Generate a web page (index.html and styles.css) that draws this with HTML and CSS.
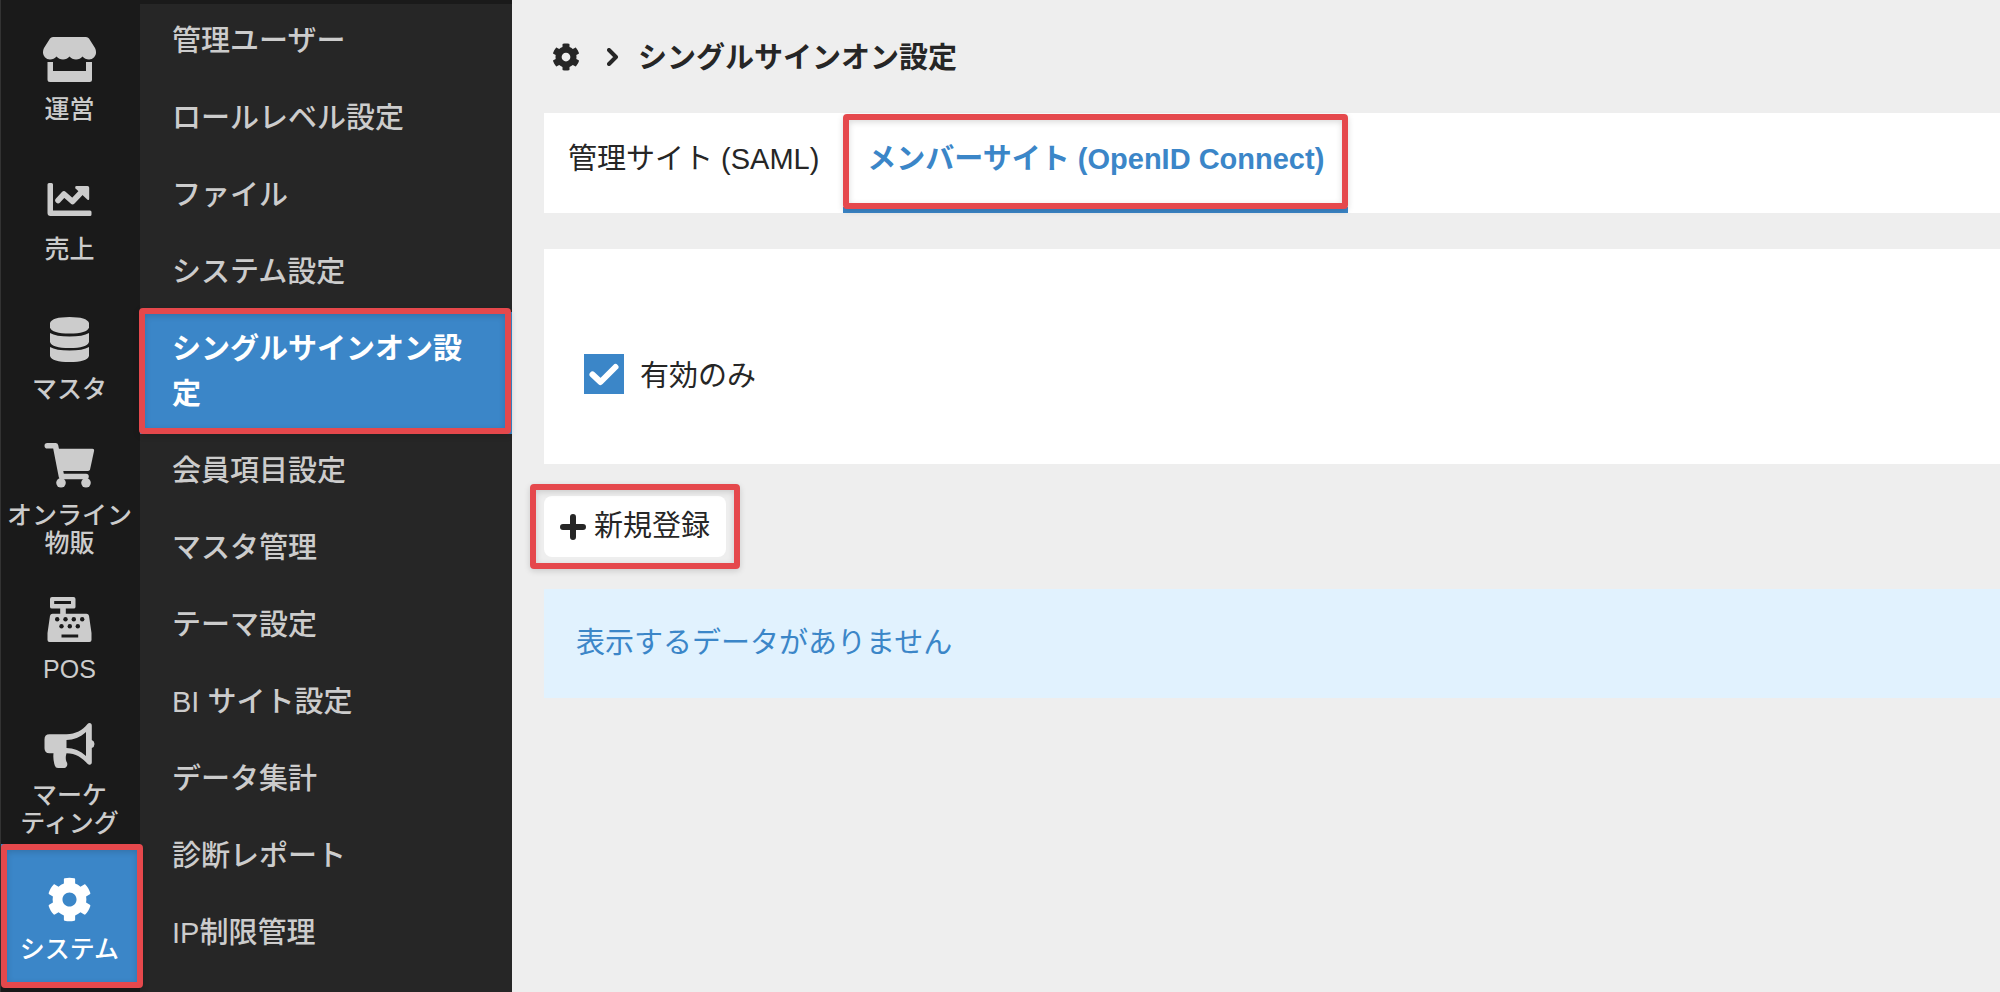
FILE: index.html
```html
<!DOCTYPE html>
<html lang="ja">
<head>
    <meta charset="UTF-8">
    <meta name="viewport" content="width=device-width, initial-scale=1.0">
    <title>シングルサインオン設定</title>
    <link rel="stylesheet" href="styles.css">
</head>
<body>
    <!-- Shared gear icon -->
    <svg class="sprite" aria-hidden="true">
        <symbol id="gear" viewBox="0 0 512 512">
            <path d="M487.4 315.7l-42.6-24.6c4.3-23.2 4.3-47 0-70.2l42.6-24.6c4.9-2.8 7.1-8.6 5.5-14-11.1-35.6-30-67.8-54.7-94.6-3.8-4.1-10-5.1-14.8-2.3L380.8 110c-17.9-15.4-38.5-27.3-60.8-35.1V25.8c0-5.6-3.9-10.5-9.4-11.7-36.7-8.2-74.3-7.8-109.2 0-5.5 1.2-9.4 6.1-9.4 11.7V75c-22.2 7.9-42.8 19.8-60.8 35.1L88.7 85.5c-4.9-2.8-11-1.9-14.8 2.3-24.7 26.7-43.6 58.9-54.7 94.6-1.7 5.4.6 11.2 5.5 14L67.3 221c-4.3 23.2-4.3 47 0 70.2l-42.6 24.6c-4.9 2.8-7.1 8.6-5.5 14 11.1 35.6 30 67.8 54.7 94.6 3.8 4.1 10 5.1 14.8 2.3l42.6-24.6c17.9 15.4 38.5 27.3 60.8 35.1v49.2c0 5.6 3.9 10.5 9.4 11.7 36.7 8.2 74.3 7.8 109.2 0 5.5-1.2 9.4-6.1 9.4-11.7v-49.2c22.2-7.9 42.8-19.8 60.8-35.1l42.6 24.6c4.9 2.8 11 1.9 14.8-2.3 24.7-26.7 43.6-58.9 54.7-94.6 1.5-5.5-.7-11.3-5.6-14.1zM256 336c-44.1 0-80-35.9-80-80s35.9-80 80-80 80 35.9 80 80-35.9 80-80 80z"/>
        </symbol>
    </svg>

    <div class="app">
        <!-- Main menu -->
        <nav class="rail" aria-label="メインメニュー">
            <a href="#" class="rail-item">
                <svg class="rail-icon" viewBox="0 0 53 45">
                    <path d="M10 0h33q2 0 3 1.500L52 11q1 2 1 4a7 7 0 0 1-7 7.500q-4 0-6.500-3q-2.500 3-6.500 3t-6.500-3q-2.500 3-6.500 3t-6.500-3q-2.500 3-6.500 3a7 7 0 0 1-7-7.500q0-2 1-4L7 1.500Q8 0 10 0z"/>
                    <path d="M4.500 25H10v9h33v-9h6v17.500q0 2.500-2.500 2.500H7q-2.500 0-2.500-2.500z"/>
                </svg>
                <span>運営</span>
            </a>
            <a href="#" class="rail-item">
                <svg class="rail-icon" viewBox="0 -6 44 45">
                    <path d="M1.500 0H4q1.500 0 1.500 1.500v26H42.500q1.500 0 1.500 1.500v2.500q0 1.500-1.500 1.500H3q-3 0-3-3V1.500Q0 0 1.500 0z"/>
                    <path class="line" d="M10.500 17.500l6-6.500 8.500 7.500L35 8"/>
                    <path d="M29 3h11q1.700 0 1.700 1.700v11q0 2-1.700 1L28 5.500Q27 3 29 3z"/>
                </svg>
                <span>売上</span>
            </a>
            <a href="#" class="rail-item">
                <svg class="rail-icon" viewBox="0 0 39 45">
                    <path d="M0 6Q2 0 19.500 0T39 6v4.500q-2 6-19.500 6T0 10.500z"/>
                    <path d="M0 16q6 3.500 19.500 3.500T39 16v9q-2 6-19.500 6T0 25z"/>
                    <path d="M0 30q6 3.500 19.500 3.500T39 30v9q-2 6-19.500 6T0 39z"/>
                </svg>
                <span>マスタ</span>
            </a>
            <a href="#" class="rail-item">
                <svg class="rail-icon" viewBox="0 0 50 45">
                    <path class="line" d="M2.800 2.800H11l6 30.700h24.500"/>
                    <path d="M11 5.700h37q2 0 1.600 2l-4 18.600q-.4 1.600-2 1.600H15z"/>
                    <circle cx="16.500" cy="39.800" r="4.800"/>
                    <circle cx="41.500" cy="39.800" r="4.800"/>
                </svg>
                <span>オンライン<br>物販</span>
            </a>
            <a href="#" class="rail-item">
                <svg class="rail-icon" viewBox="0 0 44 45">
                    <path fill-rule="evenodd" d="M4 0h22q2 0 2 2v8q0 1.500-2 1.500h-7.700v5.200H39q2 0 2.500 2L44 36v7q0 2-2 2H2q-2 0-2-2v-7l2.500-17.300q.5-2 2.500-2h7.700v-5.200H4.500q-2 0-2-1.500V2q0-2 2-2zM6.700 4v3h16.800V4z"/>
                    <g class="hole">
                        <circle cx="9.700" cy="22.300" r="2.200"/>
                        <circle cx="18" cy="22.300" r="2.200"/>
                        <circle cx="26.300" cy="22.300" r="2.200"/>
                        <circle cx="34.700" cy="22.300" r="2.200"/>
                        <circle cx="14" cy="29.300" r="2.200"/>
                        <circle cx="22.300" cy="29.300" r="2.200"/>
                        <circle cx="30.300" cy="29.300" r="2.200"/>
                        <rect x="14" y="37.500" width="16.700" height="3"/>
                    </g>
                </svg>
                <span>POS</span>
            </a>
            <a href="#" class="rail-item">
                <svg class="rail-icon" viewBox="0 0 50 45">
                    <path fill-rule="evenodd" d="M5 11.300h17C31 11.300 38 7 43 1q1.500-1.500 3-.7 1.300.5 1.300 2.200V17q2.700 1 2.700 4t-2.700 4v14.500q0 1.500-1.300 2-1.500.6-3-.7C38 35 31 30.300 22 30.300q-1.500 5 0 8.500 1.500 2 .3 4.400-.8 1.800-2.300 1.800h-6.500q-2.500 0-3.200-2.500-2-6-1.300-12.200H5q-5 0-5-5v-9q0-5 5-5zM22 17v8c7 0 14 2.700 19.500 8V9C36 14.300 29 17 22 17z"/>
                </svg>
                <span>マーケ<br>ティング</span>
            </a>
            <a href="#" class="rail-item active marked" aria-current="page">
                <svg class="rail-icon"><use href="#gear"/></svg>
                <span>システム</span>
            </a>
        </nav>

        <!-- Submenu -->
        <nav class="submenu" aria-label="システム">
            <a href="#">管理ユーザー</a>
            <a href="#">ロールレベル設定</a>
            <a href="#">ファイル</a>
            <a href="#">システム設定</a>
            <a href="#" class="active marked" aria-current="page">シングルサインオン設定</a>
            <a href="#">会員項目設定</a>
            <a href="#">マスタ管理</a>
            <a href="#">テーマ設定</a>
            <a href="#">BI サイト設定</a>
            <a href="#">データ集計</a>
            <a href="#">診断レポート</a>
            <a href="#">IP制限管理</a>
        </nav>

        <main class="content">
            <header class="page-header">
                <svg class="header-gear"><use href="#gear"/></svg>
                <svg class="header-arrow" viewBox="0 0 12 18"><path d="M2 2l7 7-7 7"/></svg>
                <h1>シングルサインオン設定</h1>
            </header>

            <div class="tabs">
                <a href="#" class="tab">管理サイト (SAML)</a>
                <a href="#" class="tab active marked">メンバーサイト (OpenID Connect)</a>
            </div>

            <form class="filter">
                <label class="check" for="activeOnly">
                    <span class="check-box">
                        <input type="checkbox" id="activeOnly" name="activeOnly" checked>
                        <svg viewBox="0 0 40 40"><path d="M8.500 20.500l8 7.500L31.500 13"/></svg>
                    </span>
                    <span class="check-text">有効のみ</span>
                </label>
            </form>

            <div class="toolbar marked">
                <button type="button" class="add-button">
                    <svg viewBox="0 0 26 26"><path d="M13 3v20M3 13h20"/></svg>
                    新規登録
                </button>
            </div>

            <p class="notice">表示するデータがありません</p>
        </main>
    </div>
</body>
</html>
```
FILE: styles.css
```css
* {
    box-sizing: border-box;
}

body {
    margin: 0;
    background-color: #eee;
    color: #262626;
    font-family: "Liberation Sans", "Noto Sans CJK JP", sans-serif;
    font-size: 29px;
    line-height: 45px;
}

a {
    color: inherit;
    text-decoration: none;
}

.sprite {
    display: none;
}

.app {
    display: flex;
    min-height: 100vh;
}

/* Red highlight frame */
.marked {
    position: relative;
}

.marked::after {
    content: "";
    position: absolute;
    inset: 0;
    z-index: 1;
    border: 6px solid #e5484c;
    border-radius: 4px;
    box-shadow: 0 2px 6px rgba(0, 0, 0, 0.15), inset 0 2px 6px rgba(0, 0, 0, 0.15);
    pointer-events: none;
}

/* Main menu */
.rail {
    flex: none;
    width: 140px;
    padding-top: 4px;
    background-color: #1a1a1a;
    border-left: 1px solid #333;
    color: #ccc;
    font-size: 25px;
    font-weight: 500;
    line-height: 28px;
    text-align: center;
}

.rail-item {
    display: flex;
    flex-direction: column;
    align-items: center;
    justify-content: center;
    gap: 13px;
    height: 140px;
    padding: 12px 2px 0 0;
    white-space: nowrap;
}

.rail-icon {
    width: 53px;
    height: 45px;
    fill: currentColor;
}

.rail-icon .line {
    fill: none;
    stroke: currentColor;
    stroke-width: 5.6;
    stroke-linecap: round;
    stroke-linejoin: round;
}

.rail-icon .hole {
    fill: #1a1a1a;
}

.rail-item.active {
    background-color: #3b86c8;
    color: #fff;
}

.rail-item.marked::after {
    inset: 0 -3px -4px 0;
    z-index: 2;
}

/* Submenu */
.submenu {
    flex: none;
    width: 372px;
    border-top: 4px solid #1a1a1a;
    background-color: #262626;
    color: #ccc;
    font-weight: 500;
}

.submenu a {
    display: block;
    padding: 15px 32px 17px;
}

.submenu .active {
    background-color: #3b86c8;
    color: #fff;
    font-weight: bold;
}

.submenu .marked::after {
    inset: -4px 1px 0 -1px;
}

/* Content */
.content {
    flex: 1;
    min-width: 0;
    padding-left: 32px;
}

.page-header {
    display: flex;
    align-items: center;
    height: 113px;
    padding-left: 8px;
}

.header-gear {
    width: 28px;
    height: 28px;
    fill: currentColor;
}

.header-arrow {
    width: 12px;
    height: 18px;
    margin: 0 19px 0 27px;
    fill: none;
    stroke: currentColor;
    stroke-width: 4;
    stroke-linecap: round;
    stroke-linejoin: round;
}

h1 {
    margin: 0;
    padding-top: 4px;
    font-size: 29px;
}

.tabs {
    display: flex;
    height: 100px;
    margin-bottom: 36px;
    background-color: #fff;
}

.tab {
    padding: 24px 24px 25px;
    border-bottom: 6px solid transparent;
    white-space: nowrap;
}

.tab.active {
    border-bottom-color: #3b86c8;
    color: #3b86c8;
    font-weight: bold;
}

.tab.marked::after {
    inset: 1px 0 -2px;
}

.filter {
    padding: 105px 40px 70px;
    background-color: #fff;
}

.check {
    display: flex;
    align-items: center;
    gap: 16px;
    width: fit-content;
    line-height: 36px;
}

.check-text {
    padding-top: 4px;
}

.check-box {
    display: grid;
    width: 40px;
    height: 40px;
}

.check-box input,
.check-box svg {
    grid-area: 1 / 1;
    width: 40px;
    height: 40px;
    margin: 0;
}

.check-box input {
    appearance: none;
    border: 2px solid #3b86c8;
    background-color: #fff;
}

.check-box input:checked {
    background-color: #3b86c8;
}

.check-box svg {
    fill: none;
    stroke: #fff;
    stroke-width: 6;
    stroke-linecap: round;
    stroke-linejoin: round;
    pointer-events: none;
}

.toolbar {
    width: fit-content;
    margin: 32px 0;
}

.toolbar.marked::after {
    inset: -12px -14px -12px -14px;
}

.add-button {
    display: flex;
    align-items: center;
    gap: 8px;
    height: 61px;
    padding: 0 16px;
    border: 0;
    border-radius: 8px;
    background-color: #fff;
    color: inherit;
    font: inherit;
    cursor: pointer;
}

.add-button svg {
    width: 26px;
    height: 26px;
    fill: none;
    stroke: currentColor;
    stroke-width: 6;
    stroke-linecap: round;
}

.notice {
    margin: 0;
    padding: 32px;
    background-color: #e1f2fe;
    color: #3b86c8;
}
```
